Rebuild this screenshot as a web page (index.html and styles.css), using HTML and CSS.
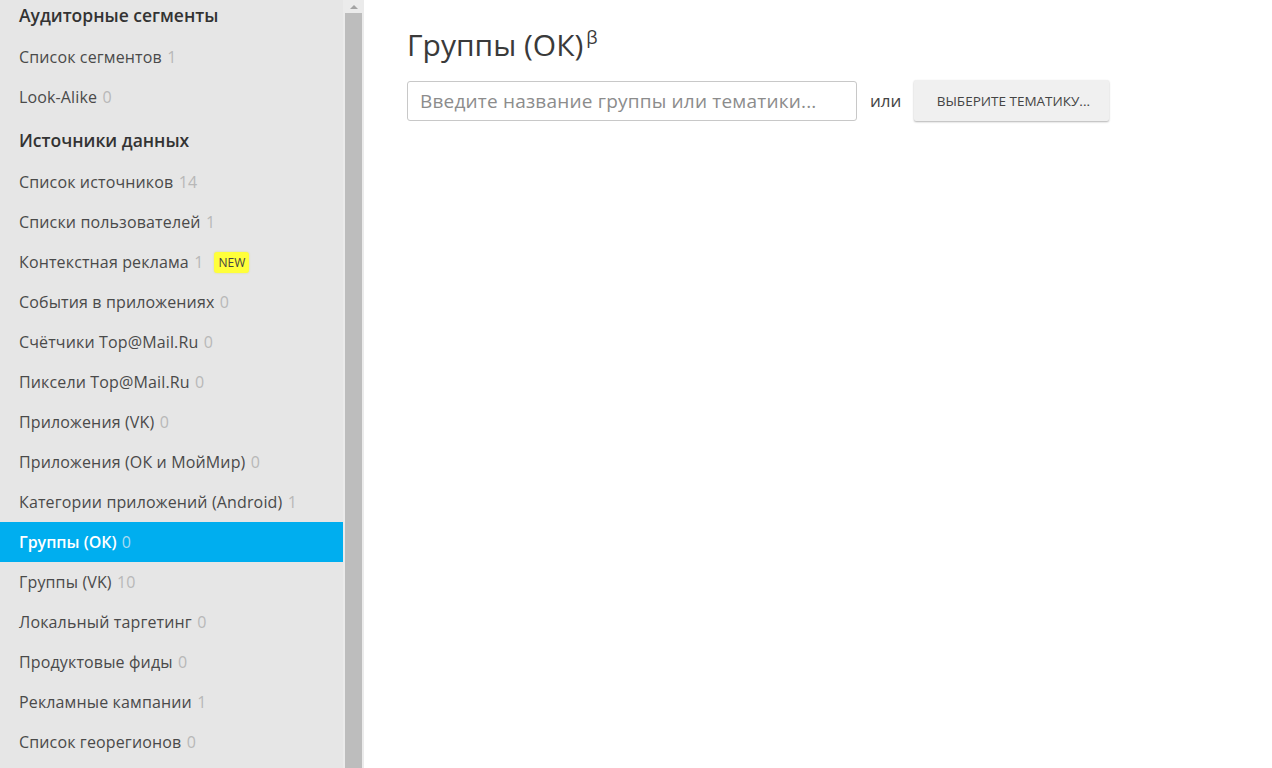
FILE: index.html
```html
<!DOCTYPE html>
<html lang="ru">
<head>
<meta charset="utf-8">
<link rel="stylesheet" href="styles.css">
</head>
<body>
<div class="app">
  <aside class="sidebar">
    <nav class="menu">
      <div class="heading">Аудиторные сегменты</div>
      <a class="item">Список сегментов <span class="count">1</span></a>
      <a class="item">Look-Alike <span class="count">0</span></a>
      <div class="heading">Источники данных</div>
      <a class="item">Список источников <span class="count">14</span></a>
      <a class="item">Списки пользователей <span class="count">1</span></a>
      <a class="item">Контекстная реклама <span class="count">1</span><span class="badge">NEW</span></a>
      <a class="item">События в приложениях <span class="count">0</span></a>
      <a class="item">Счётчики Top@Mail.Ru <span class="count">0</span></a>
      <a class="item">Пиксели Top@Mail.Ru <span class="count">0</span></a>
      <a class="item">Приложения (VK) <span class="count">0</span></a>
      <a class="item">Приложения (ОК и МойМир) <span class="count">0</span></a>
      <a class="item">Категории приложений (Android) <span class="count">1</span></a>
      <a class="item active">Группы (ОК) <span class="count">0</span></a>
      <a class="item">Группы (VK) <span class="count">10</span></a>
      <a class="item">Локальный таргетинг <span class="count">0</span></a>
      <a class="item">Продуктовые фиды <span class="count">0</span></a>
      <a class="item">Рекламные кампании <span class="count">1</span></a>
      <a class="item">Список георегионов <span class="count">0</span></a>
    </nav>
    <div class="scrollbar">
      <div class="arrow"></div>
      <div class="thumb"></div>
    </div>
  </aside>
  <main class="content">
    <h1 class="title">Группы (ОК)<sup class="beta">β</sup></h1>
    <div class="search-row">
      <input class="search" type="text" placeholder="Введите название группы или тематики...">
      <span class="or">или</span>
      <button class="choose">ВЫБЕРИТЕ ТЕМАТИКУ...</button>
    </div>
  </main>
</div>
</body>
</html>
```
FILE: styles.css
```css
* { box-sizing: border-box; }
html, body { margin: 0; padding: 0; height: 100%; overflow: hidden; }
body {
  font-family: "Open Sans", "Noto Sans", sans-serif;
  background: #fff;
  color: #333;
}
.app { display: flex; height: 768px; }
.sidebar {
  display: flex;
  width: 364px;
  flex-shrink: 0;
  background: #e6e6e6;
  overflow: hidden;
}
.menu {
  width: 343px;
  margin-top: -8px;
  display: flex;
  flex-direction: column;
}
.heading {
  height: 45px;
  display: flex;
  align-items: center;
  padding-left: 19px;
  font-size: 17.5px;
  font-weight: 600;
  color: #333;
}
.item {
  height: 40px;
  flex-shrink: 0;
  display: flex;
  align-items: center;
  padding-left: 19px;
  font-size: 16px;
  letter-spacing: 0.14px;
  color: #4a4a4a;
  white-space: pre;
}
.item .count { color: #b8b8b8; margin-left: 1px; }
.item.active { background: #00aeef; color: #fff; font-weight: 600; letter-spacing: 0; }
.item.active .count { color: #a8dcf3; font-weight: 400; }
.badge {
  background: #ffff3a;
  color: #444;
  font-size: 12px;
  letter-spacing: 0;
  line-height: 13px;
  padding: 4px 4px;
  border-radius: 3px;
  margin-left: 11px;
  box-shadow: 0 0 2px rgba(200, 200, 0, 0.4);
}
.scrollbar {
  width: 21px;
  background: #ebebeb;
  padding: 0 2px;
  display: flex;
  flex-direction: column;
}
.arrow {
  height: 13px;
  display: flex;
  justify-content: center;
  align-items: center;
}
.arrow::before {
  content: "";
  border-left: 4px solid transparent;
  border-right: 4px solid transparent;
  border-bottom: 4px solid #a3a3a3;
}
.thumb { flex: 1; background: #bdbdbd; }
.content { flex: 1; padding: 25px 0 0 43px; }
.title {
  margin: 0;
  font-size: 30px;
  font-weight: 400;
  color: #3a3a3a;
  line-height: 40px;
}
.beta { font-size: 18px; vertical-align: top; line-height: 18px; position: relative; top: 3px; margin-left: 3px; }
.search-row {
  margin-top: 15px;
  display: flex;
  align-items: center;
}
.search {
  width: 450px;
  height: 40px;
  border: 1px solid #c8c8c8;
  border-radius: 3px;
  padding: 0 12px;
  font-family: inherit;
  font-size: 19px;
  letter-spacing: 0.2px;
  color: #333;
  outline: none;
}
.search::placeholder { color: #8c8c8c; }
.or { margin: 0 13px; font-size: 17px; color: #444; }
.choose {
  height: 41px;
  width: 195px;
  border: none;
  border-radius: 2px;
  background: #f0f0f0;
  box-shadow: 0 1px 2px rgba(0,0,0,0.3);
  font-family: inherit;
  font-size: 13.5px;
  color: #444;
  padding: 0 0 0 3px;
}
```
